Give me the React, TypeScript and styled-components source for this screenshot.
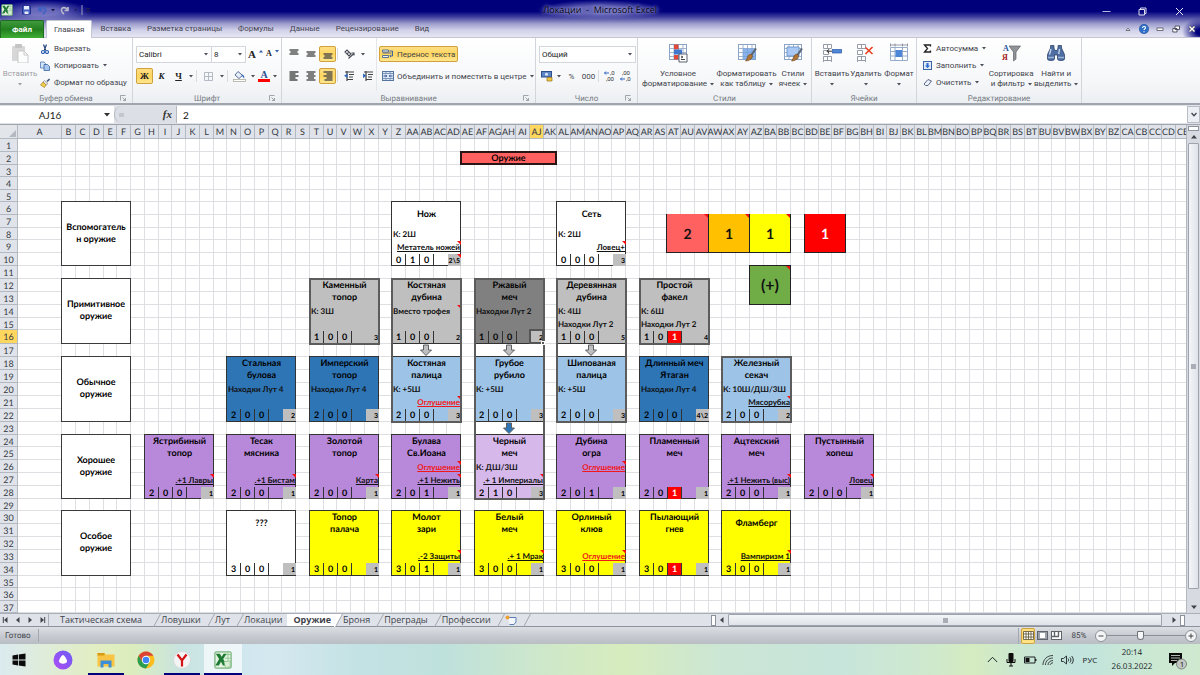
import React from 'react';
import styled, { createGlobalStyle, css } from 'styled-components';

const GlobalStyle = createGlobalStyle`
  *, *::before, *::after { box-sizing: border-box; }
  html, body { margin: 0; padding: 0; }
  body {
    font-family: Roboto, "Open Sans", sans-serif;
    font-size: 8px;
    color: #3f444c;
    text-rendering: geometricPrecision;
    overflow: hidden;
  }
  button, input, select { font: inherit; color: inherit; margin: 0; padding: 0; border: 0; background: none; border-radius: 0; }
  svg { display: block; flex: none; }
`;

/* ---------- data ---------- */

type Tone = 'white' | 'stone' | 'iron' | 'steel' | 'sky' | 'violet' | 'lilac' | 'gold';

const tones: Record<Tone, string> = {
  white: '#ffffff',
  stone: '#bfbfbf',
  iron: '#808080',
  steel: '#2e75b6',
  sky: '#9dc3e6',
  violet: '#b889db',
  lilac: '#d6b8eb',
  gold: '#ffff00',
};

interface Effect {
  text: string;
  right?: boolean;
  red?: boolean;
  note?: boolean;
}

interface Weapon {
  slot: number;
  row: number;
  name: string[];
  tone: Tone;
  first?: Effect;
  second?: Effect;
  stats: [number, number, number];
  fire?: boolean;
  level: string;
  levelNote?: boolean;
}

const left = (text: string, note = false): Effect => ({ text, note });
const right = (text: string, red = false): Effect => ({ text, right: true, red, note: true });

const weapons: Weapon[] = [
  { slot: 4, row: 6, name: ['Нож'], tone: 'white', first: left('К: 2Ш'), second: right('Метатель ножей'), stats: [0, 1, 0], level: '2\\5', levelNote: true },
  { slot: 6, row: 6, name: ['Сеть'], tone: 'white', first: left('К: 2Ш'), second: right('Ловец+'), stats: [0, 0, 0], level: '3' },

  { slot: 3, row: 12, name: ['Каменный', 'топор'], tone: 'stone', first: left('К: 3Ш'), stats: [1, 0, 0], level: '3' },
  { slot: 4, row: 12, name: ['Костяная', 'дубина'], tone: 'stone', first: left('Вместо трофея', true), stats: [1, 0, 0], level: '2' },
  { slot: 5, row: 12, name: ['Ржавый', 'меч'], tone: 'iron', first: left('Находки Лут 2'), stats: [1, 0, 0], level: '2' },
  { slot: 6, row: 12, name: ['Деревянная', 'дубина'], tone: 'stone', first: left('К: 4Ш'), second: left('Находки Лут 2'), stats: [1, 0, 0], level: '5' },
  { slot: 7, row: 12, name: ['Простой', 'факел'], tone: 'stone', first: left('К: 6Ш'), second: left('Находки Лут 2'), stats: [1, 0, 1], fire: true, level: '4' },

  { slot: 2, row: 18, name: ['Стальная', 'булова'], tone: 'steel', first: left('Находки Лут 4'), stats: [2, 0, 0], level: '2' },
  { slot: 3, row: 18, name: ['Имперский', 'топор'], tone: 'steel', first: left('Находки Лут 4'), stats: [2, 0, 0], level: '3' },
  { slot: 4, row: 18, name: ['Костяная', 'палица'], tone: 'sky', first: left('К: +5Ш'), second: right('Оглушение', true), stats: [2, 0, 0], level: '3' },
  { slot: 5, row: 18, name: ['Грубое', 'рубило'], tone: 'sky', first: left('К: +5Ш'), stats: [2, 0, 0], level: '3' },
  { slot: 6, row: 18, name: ['Шипованая', 'палица'], tone: 'sky', first: left('К: +5Ш'), stats: [2, 0, 0], level: '3' },
  { slot: 7, row: 18, name: ['Длинный меч', 'Ятаган'], tone: 'steel', first: left('Находки Лут 4'), stats: [2, 0, 0], level: '4\\2' },
  { slot: 8, row: 18, name: ['Железный', 'секач'], tone: 'sky', first: left('К: 10Ш/ДШ/3Ш'), second: right('Мясорубка'), stats: [2, 0, 0], level: '2' },

  { slot: 1, row: 24, name: ['Ястрибиный', 'топор'], tone: 'violet', second: right('.+1 Лавры'), stats: [2, 0, 0], level: '1' },
  { slot: 2, row: 24, name: ['Тесак', 'мясника'], tone: 'violet', second: right('.+1 Бистам'), stats: [2, 0, 0], level: '1' },
  { slot: 3, row: 24, name: ['Золотой', 'топор'], tone: 'violet', second: right('Карта'), stats: [2, 0, 0], level: '1' },
  { slot: 4, row: 24, name: ['Булава', 'Св.Иоана'], tone: 'violet', first: right('Оглушение', true), second: right('.+1 Нежить'), stats: [2, 0, 1], level: '1' },
  { slot: 5, row: 24, name: ['Черный', 'меч'], tone: 'lilac', first: left('К: ДШ/3Ш'), second: right('.+ 1 Империалы'), stats: [2, 1, 0], level: '3' },
  { slot: 6, row: 24, name: ['Дубина', 'огра'], tone: 'violet', first: right('Оглушение', true), stats: [2, 0, 1], level: '1' },
  { slot: 7, row: 24, name: ['Пламенный', 'меч'], tone: 'violet', stats: [2, 0, 1], fire: true, level: '1' },
  { slot: 8, row: 24, name: ['Ацтекский', 'меч'], tone: 'violet', second: right('.+1 Нежить (выс)'), stats: [2, 0, 0], level: '1' },
  { slot: 9, row: 24, name: ['Пустынный', 'хопеш'], tone: 'violet', second: right('Ловец'), stats: [2, 0, 0], level: '1' },

  { slot: 2, row: 30, name: ['???'], tone: 'white', stats: [3, 0, 0], level: '1' },
  { slot: 3, row: 30, name: ['Топор', 'палача'], tone: 'gold', stats: [3, 0, 0], level: '1' },
  { slot: 4, row: 30, name: ['Молот', 'зари'], tone: 'gold', second: right('.-2 Защиты'), stats: [3, 0, 1], level: '1' },
  { slot: 5, row: 30, name: ['Белый', 'меч'], tone: 'gold', second: right('.+ 1 Мрак'), stats: [3, 0, 0], level: '1' },
  { slot: 6, row: 30, name: ['Орлиный', 'клюв'], tone: 'gold', second: right('Оглушение', true), stats: [3, 0, 0], level: '1' },
  { slot: 7, row: 30, name: ['Пылающий', 'гнев'], tone: 'gold', stats: [3, 0, 1], fire: true, level: '1' },
  { slot: 8, row: 30, name: ['Фламберг'], tone: 'gold', second: right('Вампиризм 1'), stats: [3, 0, 0], level: '1' },
];

const categories = [
  { row: 6, lines: ['Вспомогатель', 'н оружие'] },
  { row: 12, lines: ['Примитивное', 'оружие'] },
  { row: 18, lines: ['Обычное', 'оружие'] },
  { row: 24, lines: ['Хорошее', 'оружие'] },
  { row: 30, lines: ['Особое', 'оружие'] },
];

const counters = [
  { col: 44, text: '2', bg: '#ff6161', note: true },
  { col: 47, text: '1', bg: '#ffc000', note: true },
  { col: 50, text: '1', bg: '#ffff00', note: true },
  { col: 54, text: '1', bg: '#ff0000', light: true },
];

const frames = [
  { slot: 3, from: 12, to: 17 },
  { slot: 4, from: 12, to: 23 },
  { slot: 5, from: 12, to: 29 },
  { slot: 6, from: 12, to: 23 },
  { slot: 7, from: 12, to: 17 },
  { slot: 8, from: 18, to: 23 },
];

const arrows = [
  { slot: 4, row: 17, fill: '#bfbfbf' },
  { slot: 5, row: 17, fill: '#bfbfbf' },
  { slot: 6, row: 17, fill: '#bfbfbf' },
  { slot: 5, row: 23, fill: '#2e75b6' },
];

const rowHeights = [
  13, 13, 12, 13, 12, 13, 13, 12, 13, 13, 13, 13, 13, 13, 12, 14, 13, 13, 13, 13,
  13, 13, 13, 12, 13, 13, 13, 13, 12, 13, 13, 13, 13, 13, 12, 13, 12,
];

const columnCount = 83;

const columnName = (index: number): string =>
  index < 26
    ? String.fromCharCode(65 + index)
    : String.fromCharCode(64 + Math.floor(index / 26)) + String.fromCharCode(65 + (index % 26));

/* ---------- window frame ---------- */

const Window = styled.div`
  display: flex;
  flex-direction: column;
  min-height: 100vh;
  overflow: hidden;
  background: #dfe3e8;
`;

const Chrome = styled.header`
  background:
    radial-gradient(ellipse 18px 14px at 100% 84%, #00007b 20%, rgba(0, 0, 123, 0) 100%),
    linear-gradient(#00007b 0%, #00007b 30%, #3c3c9c 44%, #9c9ccc 62%, #d2d2ea 80%, #e9e9f6 100%);
`;

const TitleBar = styled.div`
  display: grid;
  grid-template-columns: 1fr auto 1fr;
  align-items: center;
  height: 20px;
`;

const QuickAccess = styled.div`
  display: flex;
  align-items: center;
  gap: 6px;
  width: 92px;
  height: 20px;
  padding-left: 1px;
  background: radial-gradient(ellipse 50px 12px at 46% 60%, rgba(150, 150, 215, 0.7) 30%, rgba(150, 150, 215, 0) 100%);
`;

const Title = styled.h1`
  margin: 0;
  padding: 0 6px;
  background: radial-gradient(closest-side, rgba(130, 130, 200, 0.75) 40%, rgba(130, 130, 200, 0) 100%);
  font-family: "Open Sans", sans-serif;
  font-size: 9px;
  line-height: 20px;
  font-weight: 400;
  color: #05050f;
  white-space: pre;
  text-shadow: 0 0 3px #a5a5dc, 0 0 5px #9a9ad6;
`;

const WindowButtons = styled.div`
  display: flex;
  justify-content: flex-end;
  padding: 3px 2px 0 0;
`;

const FrameButton = styled.button<{ $w: number }>`
  display: flex;
  align-items: center;
  justify-content: center;
  width: ${(p) => p.$w}px;
  height: 16px;
`;

const TabRow = styled.nav`
  display: flex;
  align-items: flex-end;
  height: 18px;
  border-bottom: 1px solid #c3c7d4;
`;

const FileTab = styled.button`
  width: 44px;
  height: 18px;
  && {
    margin: 0 2px -1px 0;
    border: 1px solid #1f6b22;
    border-bottom: 0;
    border-radius: 2px 2px 0 0;
    background: linear-gradient(#3f9a3c, #23801f 50%, #3fae35);
    color: #fff;
    font-weight: 700;
  }
`;

const RibbonTab = styled.button<{ $active?: boolean }>`
  height: 18px;
  && {
    padding: 0 8px;
    color: #43434f;
    ${(p) =>
      p.$active &&
      css`
        padding: 0 7px;
        margin-bottom: -1px;
        background: #fff;
        border: 1px solid #c3c7d4;
        border-bottom: 0;
        border-radius: 2px 2px 0 0;
      `}
  }
`;

const TabTools = styled.div`
  display: flex;
  align-items: center;
  margin-left: auto;
`;

/* ---------- ribbon ---------- */

const Ribbon = styled.div`
  display: flex;
  height: 67px;
  background: linear-gradient(#ffffff, #f7f8fa 60%, #eceff2);
  border-bottom: 2px solid #a0a5ad;
`;

const Group = styled.section<{ $w: number }>`
  display: flex;
  flex-direction: column;
  flex: none;
  width: ${(p) => p.$w}px;
  border-right: 1px solid #d2d5da;
`;

const GroupBody = styled.div<{ $pad?: number }>`
  display: flex;
  flex: 1;
  padding-left: ${(p) => p.$pad ?? 4}px;
`;

const GroupLabel = styled.div`
  display: grid;
  grid-template-columns: 12px 1fr 12px;
  align-items: center;
  height: 12px;
  padding-top: 2px;
  text-align: center;
  color: #777c85;
`;

const Stack = styled.div<{ $divided?: boolean }>`
  display: flex;
  flex-direction: column;
  gap: 6px;
  padding-top: 8px;
  ${(p) =>
    p.$divided &&
    css`
      padding-left: 2px;
      border-left: 1px solid #e4e6ea;
    `}
`;

const ToolRow = styled.div`
  display: flex;
  align-items: center;
  height: 16px;
`;

const hot = css`
  background: linear-gradient(#ffe08a, #ffd65e 50%, #ffe896);
  outline: 1px solid #cfa23f;
  outline-offset: -1px;
  border-radius: 2px;
`;

const ToolButton = styled.button<{ $w?: number; $hot?: boolean }>`
  display: flex;
  align-items: center;
  justify-content: center;
  flex: none;
  gap: 3px;
  width: ${(p) => (p.$w ? `${p.$w}px` : 'auto')};
  height: 16px;
  white-space: nowrap;
  && {
    padding: 0 ${(p) => (p.$w ? 0 : 3)}px;
    ${(p) => p.$hot && hot}
  }
`;

const Letter = styled.span<{ $italic?: boolean; $under?: boolean; $size?: number }>`
  font-family: "Liberation Serif", serif;
  font-weight: 700;
  font-size: ${(p) => p.$size ?? 9}px;
  line-height: 10px;
  color: #222;
  font-style: ${(p) => (p.$italic ? 'italic' : 'normal')};
  text-decoration: ${(p) => (p.$under ? 'underline' : 'none')};
`;

const Divider = styled.span`
  flex: none;
  width: 1px;
  height: 12px;
  margin: 0 1px;
  background: #d9dce0;
`;

const PickerBox = styled.label<{ $w: number }>`
  position: relative;
  display: flex;
  align-items: center;
  width: ${(p) => p.$w}px;
  height: 17px;
  border: 1px solid #d3d6da;
  background: #fff;
  & + & { margin-left: -1px; }
  select {
    appearance: none;
    width: 100%;
    height: 15px;
    padding-left: 2px;
    color: #222;
    outline: 0;
  }
  svg { position: absolute; right: 3px; pointer-events: none; }
`;

const CommandList = styled.div`
  display: flex;
  flex-direction: column;
  padding-top: 2px;
`;

const Command = styled.button`
  display: flex;
  align-items: center;
  gap: 4px;
  height: 17px;
  white-space: nowrap;
  && { padding: 0 2px; }
`;

const BigButton = styled.button<{ $w: number; $faded?: boolean }>`
  display: flex;
  flex-direction: column;
  align-items: center;
  flex: none;
  width: ${(p) => p.$w}px;
  line-height: 10px;
  white-space: nowrap;
  opacity: ${(p) => (p.$faded ? 0.5 : 1)};
  && { padding-top: 5px; }
  > svg { margin-bottom: 6px; }
`;

const BigLine = styled.span`
  display: flex;
  align-items: center;
  gap: 3px;
  height: 10px;
`;

/* ---------- formula bar ---------- */

const FormulaBar = styled.div`
  display: flex;
  height: 20px;
  padding: 1px 0;
  background: #dfe3e8;
  border-bottom: 1px solid #a0a5ad;
  font-family: Lato, "Open Sans", sans-serif;
`;

const NameBox = styled.label`
  display: flex;
  align-items: center;
  width: 114px;
  padding-right: 4px;
  background: #fff;
  input {
    flex: 1;
    width: 0;
    padding-right: 4px;
    text-align: center;
    font-size: 10px;
    color: #222;
  }
`;

const FxButtons = styled.div`
  display: flex;
  align-items: center;
  justify-content: space-between;
  width: 63px;
  padding: 0 4px;
  border: 1px solid #b4b9c0;
  border-width: 0 1px 0 1px;
  border-radius: 8px 0 0 8px;
  background: #dce0e6;
`;

const Fx = styled.span`
  font-family: "Liberation Serif", serif;
  font-style: italic;
  font-weight: 700;
  font-size: 11px;
  line-height: 14px;
  color: #333;
`;

const FormulaInput = styled.input`
  flex: 1;
  min-width: 0;
  && { padding-left: 6px; background: #fff; font-size: 10px; color: #111; }
`;

const ExpandButton = styled.button`
  display: flex;
  align-items: center;
  justify-content: center;
  width: 13px;
  && { border: 1px solid #b9bec6; background: #eceff3; }
`;

/* ---------- sheet ---------- */

const SheetArea = styled.main`
  display: flex;
  flex: 1 0 auto;
`;

const Viewport = styled.div`
  flex: 1;
  min-width: 0;
  overflow: hidden;
  background: #fff;
`;

const Sheet = styled.table`
  display: grid;
  grid-template-columns: 18px 44px repeat(20, 14px 14px 14px 13px) 14px 14px;
  grid-template-rows: 14px ${rowHeights.map((h) => `${h}px`).join(' ')};
  width: max-content;
  font-family: Lato, "Open Sans", sans-serif;
  colgroup, thead, tbody, tr { display: contents; }
  td, th { padding: 0; }
`;

const ColumnLine = styled.col<{ $at: number }>`
  display: block;
  grid-row: 2 / -1;
  grid-column: ${(p) => p.$at};
  border-right: 1px solid #dddfe2;
`;

const headerFace = css<{ $on?: boolean }>`
  font-weight: 400;
  font-size: 9px;
  line-height: 13px;
  color: #33373e;
  text-align: center;
  white-space: nowrap;
  background: ${(p) => (p.$on ? '#ffd75f' : '#e0e4ea')};
  border-right: 1px solid #b3b9c1;
  border-bottom: 1px solid #b3b9c1;
`;

const Corner = styled.td`
  display: flex;
  align-items: flex-end;
  justify-content: flex-end;
  grid-area: 1 / 1;
  background: #e2e6eb;
  border-right: 1px solid #b3b9c1;
  border-bottom: 1px solid #b3b9c1;
`;

const ColumnHeader = styled.th<{ $at: number; $on?: boolean }>`
  ${headerFace}
  grid-row: 1;
  grid-column: ${(p) => p.$at};
  display: flex;
  justify-content: center;
`;

const RowHeader = styled.th<{ $at: number; $on?: boolean }>`
  ${headerFace}
  grid-row: ${(p) => p.$at};
  grid-column: 1;
`;

const RowLine = styled.td<{ $at: number }>`
  grid-row: ${(p) => p.$at};
  grid-column: 2 / -1;
  border-bottom: 1px solid #dddfe2;
`;

/* Merged range: k counts columns from B, rows are sheet rows. */
const range = css<{ $k: number; $row: number; $cols: number; $rows: number }>`
  position: relative;
  z-index: 1;
  grid-column: ${(p) => p.$k + 3} / span ${(p) => p.$cols};
  grid-row: ${(p) => p.$row + 1} / span ${(p) => p.$rows};
  margin: -1px 0 0 -1px;
`;

const Category = styled.td`
  ${range}
  display: flex;
  flex-direction: column;
  justify-content: center;
  border: 1px solid #3a3a3a;
  background: #fff;
  color: #000;
  font-size: 9px;
  font-weight: 700;
  line-height: 12px;
  text-align: center;
  && { padding-bottom: 2px; }
`;

const Heading = styled.td`
  ${range}
  border: 2px solid #2a1414;
  background: #ff6161;
  color: #000;
  font-size: 9px;
  font-weight: 700;
  line-height: 10px;
  text-align: center;
`;

const Counter = styled.td<{ $bg: string; $light?: boolean; $boxed?: boolean }>`
  ${range}
  display: flex;
  align-items: center;
  justify-content: center;
  background: ${(p) => p.$bg};
  border: 1px solid #222;
  border-width: ${(p) => (p.$boxed ? '1px' : '0 1px 1px')};
  color: ${(p) => (p.$light ? '#fff' : '#111')};
  font-size: ${(p) => (p.$boxed ? 16 : 14)}px;
  font-weight: 700;
`;

const CardCell = styled.td<{ $tone: Tone }>`
  ${range}
  display: grid;
  grid-template-columns: repeat(4, 14px) 1fr;
  grid-template-rows: 26px 13px 13px 1fr;
  border: 1px solid #333;
  background: ${(p) => tones[p.$tone]};
  color: #000;
  font-weight: 700;
`;

const CardName = styled.div`
  grid-column: 1 / -1;
  display: flex;
  flex-direction: column;
  justify-content: center;
  padding-bottom: 2px;
  font-size: 9px;
  line-height: 12px;
  text-align: center;
  white-space: nowrap;
`;

const CardEffect = styled.div<{ $right?: boolean; $red?: boolean }>`
  position: relative;
  grid-column: 1 / -1;
  padding: 0 1px;
  line-height: 12px;
  white-space: nowrap;
  text-align: ${(p) => (p.$right ? 'right' : 'left')};
  text-decoration: ${(p) => (p.$right ? 'underline' : 'none')};
  color: ${(p) => (p.$red ? '#f01818' : '#111')};
`;

const Stat = styled.div<{ $fire?: boolean }>`
  border-right: 1px solid #333;
  font-size: 9px;
  line-height: 12px;
  text-align: center;
  background: ${(p) => (p.$fire ? '#ff0000' : 'transparent')};
  color: ${(p) => (p.$fire ? '#fff' : '#000')};
`;

const Level = styled.div`
  position: relative;
  grid-column: 5;
  justify-self: end;
  width: 13px;
  padding: 3px 1px 0 0;
  background: #bfbfbf;
  font-size: 7px;
  line-height: 9px;
  text-align: right;
`;

const NoteMark = styled.i`
  position: absolute;
  top: 0;
  right: 0;
  border-top: 4px solid #f01010;
  border-left: 4px solid transparent;
`;

const Outline = styled.td`
  ${range}
  z-index: 2;
  margin: -1px -1px -1px -1px;
  border: 2px solid #5c5c5c;
  pointer-events: none;
`;

const ArrowCell = styled.td`
  ${range}
  display: flex;
  justify-content: center;
  margin: 0 1px 1px 0;
  background: #fff;
`;

const Selection = styled.td`
  ${range}
  z-index: 3;
  border: 2px solid #555;
  &::after {
    content: "";
    position: absolute;
    right: -3px;
    bottom: -3px;
    width: 4px;
    height: 4px;
    border: 1px solid #fff;
    background: #555;
  }
`;

/* ---------- scroll bars, sheet tabs, status ---------- */

const VerticalScroll = styled.div`
  display: flex;
  flex-direction: column;
  align-items: center;
  width: 14px;
  padding: 1px 1px 0;
  background: #d7dbe1;
  border-left: 1px solid #b3b9c1;
`;

const ScrollButton = styled.button`
  display: flex;
  flex: none;
  align-items: center;
  justify-content: center;
  width: 12px;
  height: 12px;
`;

const SplitHandle = styled.span<{ $tall?: boolean }>`
  flex: none;
  width: ${(p) => (p.$tall ? 5 : 11)}px;
  height: ${(p) => (p.$tall ? 11 : 5)}px;
  border: 1px solid #8d939c;
  background: #fff;
`;

const Thumb = styled.div<{ $vertical?: boolean }>`
  display: flex;
  flex: 1;
  align-items: center;
  justify-content: center;
  align-self: stretch;
  margin: ${(p) => (p.$vertical ? '0 0 12px' : '0 6px 0 0')};
  border: 1px solid #9ea4ad;
  border-radius: 1px;
  background: linear-gradient(${(p) => (p.$vertical ? '90deg' : '180deg')}, #f3f5f8, #dfe3e9);
  &::after {
    content: "";
    width: 5px;
    height: 5px;
    background: #a9aeb6;
  }
`;

const SheetBar = styled.div`
  display: flex;
  height: 14px;
  background: #dfe3e9;
  border-top: 1px solid #a9afb8;
  border-bottom: 1px solid #8c929b;
`;

const SheetTabs = styled.div`
  display: flex;
  align-items: stretch;
  flex: 0 0 711px;
  font-family: "Open Sans", sans-serif;
`;

const NavButtons = styled.div`
  display: flex;
  width: 49px;
  border-right: 1px solid #a9afb8;
`;

const SheetTab = styled.button<{ $active?: boolean; $first?: boolean }>`
  && {
    padding-left: ${(p) => (p.$first ? 11 : p.$active ? 6 : 0)}px;
    padding-right: ${(p) => (p.$first ? 10 : p.$active ? 3 : 5)}px;
    font-size: 9px;
    line-height: 12px;
    font-weight: ${(p) => (p.$active ? 700 : 400)};
    background: ${(p) => (p.$active ? '#fff' : 'transparent')};
  }
`;

const HorizontalScroll = styled.div`
  display: flex;
  align-items: center;
  flex: 1;
  padding-right: 15px;
`;

const StatusBar = styled.footer`
  display: flex;
  align-items: center;
  height: 17px;
  padding: 0 3px 0 5px;
  background: linear-gradient(#dcdfe3, #c6c9cf 55%, #b9bdc4);
`;

const StatusText = styled.span`
  padding-right: 7px;
  border-right: 1px solid #a4a9b1;
  line-height: 13px;
`;

const ViewButtons = styled.div`
  display: flex;
  align-items: center;
  margin-left: auto;
  padding-left: 2px;
  border-left: 1px solid #a4a9b1;
`;

const ZoomValue = styled.span`
  width: 32px;
  text-align: center;
`;

const ZoomSlider = styled.input`
  appearance: none;
  width: 78px;
  height: 12px;
  && { background: linear-gradient(#8b9098, #8b9098) center / 100% 1px no-repeat; }
  &::-webkit-slider-thumb {
    appearance: none;
    width: 7px;
    height: 9px;
    border: 1px solid #6f747c;
    border-radius: 1px 1px 4px 4px;
    background: #f6f7f9;
  }
`;

/* ---------- taskbar ---------- */

const Taskbar = styled.footer`
  display: flex;
  align-items: stretch;
  height: 31px;
  font-family: "Open Sans", sans-serif;
  background:
    linear-gradient(90deg, #dbebef 0%, #dfecd8 4%, #e2eec2 8%, #dcedbd 11%, #c9e4e0 15%, #cfe6ee 19%, #d4e8ef 23%,
      #c3e2e4 30%, #bfe1dc 37%, #cfe8c8 46%, #d7ecbe 52%, #cbe6d4 60%, #c8e5dc 70%, #cfe9cc 78%, #d5ebc0 81%,
      #c9e6d6 86%, #c2e4de 90%, #cbe8d2 96%, #cfe9cf 100%);
`;

const TaskButton = styled.button<{ $w: number; $open?: boolean; $active?: boolean }>`
  display: flex;
  align-items: center;
  justify-content: center;
  width: ${(p) => p.$w}px;
  && {
    margin-right: ${(p) => (p.$open ? 4 : 0)}px;
    border-top: 2px solid transparent;
    border-bottom: 2px solid ${(p) => (p.$open || p.$active ? '#00007b' : 'transparent')};
    background: ${(p) => (p.$active ? 'rgba(255, 255, 255, 0.65)' : 'transparent')};
  }
`;

const Tray = styled.div`
  display: flex;
  align-items: center;
  margin-left: auto;
  padding-right: 8px;
  color: #14181c;
`;

const TrayButton = styled.button<{ $w: number }>`
  display: flex;
  align-items: center;
  justify-content: center;
  width: ${(p) => p.$w}px;
  height: 31px;
`;

const Clock = styled.time`
  width: 60px;
  line-height: 14px;
  text-align: center;
`;

/* ---------- icons ---------- */

const Caret = ({ color = '#4a4f57' }: { color?: string }) => (
  <svg width="4" height="3" viewBox="0 0 4 3" aria-hidden="true"><path d="M0 0h4L2 2.500z" fill={color} /></svg>
);

const CaretButton = () => <ToolButton $w={8} aria-label="Ещё"><Caret /></ToolButton>;

const Triangle = ({ dir, bar }: { dir: 'left' | 'right' | 'up' | 'down'; bar?: boolean }) => {
  const turn = { right: 0, down: 90, left: 180, up: 270 }[dir];
  return (
    <svg width="8" height="8" viewBox="0 0 8 8" aria-hidden="true">
      <g transform={`rotate(${turn} 4 4)`} fill="#3e434b">
        <path d="M2.500 1l3.500 3-3.500 3z" />
        {bar && <path d="M6.200 1h1v6h-1z" />}
      </g>
    </svg>
  );
};

const ExcelIcon = ({ size }: { size: number }) => (
  <svg width={size} height={size} viewBox="0 0 20 20" aria-hidden="true">
    <rect x="1" y="1" width="18" height="18" rx="1" fill="#e4f3e2" stroke="#4e9b53" />
    <path d="M12 4h7M12 8h7M12 12h7M15.500 1v12" stroke="#8cc68b" strokeWidth="1" />
    <path d="M2 3h4.500l2 3.500L10.700 3H14l-3.800 6L14.500 16H10l-2.200-4L5.400 16H1.500l4.200-7z" fill="#1f7a33" />
    <path d="M11 12l7-1v6l-5 2z" fill="#d8efd6" stroke="#6eb36f" strokeWidth=".6" />
  </svg>
);

const LinesIcon = ({ rows }: { rows: [number, number][] }) => (
  <svg width="12" height="12" viewBox="0 0 12 12" aria-hidden="true">
    {rows.map(([y, w], i) => (
      <path key={i} d={`M${w < 0 ? 10.5 + w : (12 - w) / 2} ${y}h${Math.abs(w)}`} stroke="#4b4b4b" strokeWidth="1.400" />
    ))}
  </svg>
);

const LeftLines = () => (
  <svg width="12" height="12" viewBox="0 0 12 12" aria-hidden="true">
    <path d="M1.500 2h9M1.500 4h6M1.500 6h9M1.500 8h6M1.500 10h8" stroke="#4b4b4b" strokeWidth="1.400" />
  </svg>
);

const IndentIcon = ({ flip }: { flip?: boolean }) => (
  <svg width="12" height="12" viewBox="0 0 12 12" aria-hidden="true">
    <path d="M2 2h9M6 4.500h5M6 7h4M4 9.500h6M4 1v10" stroke="#444" strokeWidth="1.200" />
    <path d={flip ? 'M1 3.500l3.500 2.300L1 8z' : 'M4.500 3.500L1 5.800 4.500 8z'} fill="#2f66b8" />
  </svg>
);

const Grid = ({ children }: { children?: React.ReactNode }) => (
  <svg width="20" height="20" viewBox="0 0 20 20" aria-hidden="true">
    <rect x="1.500" y="1.500" width="17" height="15" fill="#fff" stroke="#8ba3c4" />
    <path d="M1.500 5.500h17M1.500 9.500h17M1.500 13.500h17M6 1.500v15M10.500 1.500v15M15 1.500v15" stroke="#8ba3c4" strokeWidth=".8" />
    {children}
  </svg>
);

const Brush = () => (
  <g>
    <path d="M19 5.500l-5 7" stroke="#5c6470" strokeWidth="2" />
    <path d="M14.500 11.500c1.500 1 1.200 3-.5 4.500-1.500 1.300-3.500 2-5.500 2 1.500-1.500 1.500-3 2.500-5 .8-1.500 2.300-2 3.500-1.500z" fill="#b07434" stroke="#6d4417" strokeWidth=".6" />
  </g>
);

const PasteIcon = () => (
  <svg width="20" height="20" viewBox="0 0 20 20" aria-hidden="true">
    <rect x="2" y="3" width="13" height="15" rx="1" fill="#b4b4b4" />
    <rect x="5" y="1" width="7" height="4" rx="1" fill="#8c8c8c" />
    <path d="M8 8h6l4 4v8H8z" fill="#fff" stroke="#999" />
    <path d="M14 8v4h4" fill="none" stroke="#999" />
  </svg>
);

const CutIcon = () => (
  <svg width="10" height="10" viewBox="0 0 10 10" aria-hidden="true">
    <path d="M3.500.500l2.300 6M6.500.500l-2.300 6" stroke="#27467e" strokeWidth="1.200" />
    <circle cx="3" cy="8" r="1.500" fill="none" stroke="#2d62b0" strokeWidth="1.200" />
    <circle cx="7" cy="8" r="1.500" fill="none" stroke="#2d62b0" strokeWidth="1.200" />
  </svg>
);

const CopyIcon = () => (
  <svg width="10" height="10" viewBox="0 0 10 10" aria-hidden="true">
    <path d="M.500 1h3.500l1.500 1.500v4.500h-5z" fill="#d6e4f7" stroke="#4a78b8" strokeWidth=".8" />
    <path d="M4 3.500h3.500L9.500 5.500v4H4z" fill="#a9c7ee" stroke="#33639f" strokeWidth=".8" />
  </svg>
);

const PainterIcon = () => (
  <svg width="10" height="10" viewBox="0 0 10 10" aria-hidden="true">
    <path d="M9.500 1L7 3.500" stroke="#43587a" strokeWidth="1.600" />
    <path d="M4.500 2.500l3.500 3L6 7 3 4z" fill="#e6e6ec" stroke="#666" strokeWidth=".5" />
    <path d="M3 4l3.200 3L4.500 9.500.500 7z" fill="#f2cf4c" stroke="#94701a" strokeWidth=".6" />
  </svg>
);

const LauncherIcon = () => (
  <svg width="6" height="6" viewBox="0 0 6 6" aria-hidden="true">
    <path d="M.500 5.500v-5h5M2.500 2.500l3 3M5.500 3v2.500H3" fill="none" stroke="#8b9098" strokeWidth=".8" />
  </svg>
);

const HeadTail = ({ red }: { red?: boolean }) => (
  <svg width="20" height="20" viewBox="0 0 20 20" aria-hidden="true">
    <path d="M1.500 1.500h8v4h-8zM1.500 13.500h8v4h-8zM5.500 1.500v4M5.500 13.500v4M1.500 7.500h5v4h-5zM1.500 17.500v1.500M9.500 17.500v1.500" fill="#fff" stroke="#8a929e" strokeWidth=".9" />
    {red ? (
      <path d="M9.500 4.500l7 6.500M16.500 4l-7 7" stroke="#e8401c" strokeWidth="1.600" />
    ) : (
      <>
        <rect x="10.500" y="6.500" width="9" height="3.500" fill="#4f87d8" stroke="#2c5ba5" strokeWidth=".7" />
        <path d="M10 8.200H5M7 6.200l-2 2 2 2" fill="none" stroke="#333" />
      </>
    )}
  </svg>
);

const FormatIcon = () => (
  <svg width="20" height="20" viewBox="0 0 20 20" aria-hidden="true">
    <path d="M1.500 4.500h17v13h-17zM1.500 8.500h17M1.500 13h17M6 4.500v13M13.500 4.500v13" fill="#fff" stroke="#8ba3c4" strokeWidth=".9" />
    <rect x="6.500" y="7" width="6.500" height="7" fill="#4f87d8" />
    <path d="M1.500 2h17M1.500.500v3M6 .500v3M13.500.500v3M18.500.500v3" stroke="#7a8290" strokeWidth=".8" />
  </svg>
);

const SortIcon = () => (
  <svg width="20" height="20" viewBox="0 0 20 20" aria-hidden="true">
    <path d="M8 3h11.500l-4.500 6v7l-2.500 2V9z" fill="#909499" stroke="#5e6268" strokeWidth=".7" />
    <text x="2" y="8" fontFamily="Liberation Serif, serif" fontWeight="700" fontSize="8" fill="#24509c">А</text>
    <text x="1" y="17" fontFamily="Liberation Serif, serif" fontWeight="700" fontSize="8" fill="#a01818">Я</text>
  </svg>
);

const BinocularsIcon = () => (
  <svg width="20" height="20" viewBox="0 0 20 20" aria-hidden="true">
    <path d="M4.500 5V2.500H8V5l1 2.500h2L12 5V2.500h3.500V5l3 6.500V16c0 2-7 2-7 0v-4h-3v4c0 2-7 2-7 0v-4.500z" fill="#4f6fa3" stroke="#22395f" strokeWidth=".7" />
    <path d="M5 6l-1.500 5.500M13.500 6l-.8 5" stroke="#c3d5ee" strokeWidth="1.400" />
    <path d="M2 14.500h6M12 14.500h6" stroke="#9db4d8" strokeWidth="1.400" />
  </svg>
);

const MergeIcon = () => (
  <svg width="12" height="10" viewBox="0 0 12 10" aria-hidden="true">
    <rect x=".500" y=".500" width="11" height="9" fill="#dbe8f8" stroke="#56769f" />
    <path d="M1 2.500h10M1 7.500h10M4 .500v2M8 .500v2M4 7.500v2M8 7.500v2" stroke="#56769f" strokeWidth=".7" />
    <path d="M1.500 5h3M10.500 5h-3M3.500 3.800L4.700 5 3.500 6.200M8.500 3.800L7.300 5l1.200 1.200" fill="none" stroke="#1d3f7a" strokeWidth=".9" />
  </svg>
);

const WrapIcon = () => (
  <svg width="12" height="10" viewBox="0 0 12 10" aria-hidden="true">
    <path d="M.500 1h6v2h-6zM.500 4h9M.500 6.500h6v2h-6z" fill="#eef3fa" stroke="#4d6488" strokeWidth=".9" />
    <path d="M7.500 2h3v5H8M9 5.800L7.800 7 9 8.200" fill="none" stroke="#2c5ba5" strokeWidth=".9" />
  </svg>
);

const DownArrow = ({ fill }: { fill: string }) => (
  <svg width="12" height="12" viewBox="0 0 12 12" aria-hidden="true">
    <path d="M3.500 1h5v5h3L6 11.500.500 6h3z" fill={fill} stroke="#5c6064" strokeWidth="1" />
  </svg>
);

const Slash = ({ open }: { open?: boolean }) => (
  <svg width="9" height="13" viewBox="0 0 9 13" aria-hidden="true">
    {open && <path d="M0 0h8.500L1.500 13H0z" fill="#fff" />}
    <path d="M8.500 0L1.500 13" stroke="#9aa0a9" strokeWidth=".9" />
  </svg>
);

/* ---------- pieces ---------- */

const Big = ({ w, icon, lines, below, faded }: { w: number; icon: React.ReactNode; lines: string[]; below?: boolean; faded?: boolean }) => (
  <BigButton $w={w} $faded={faded}>
    {icon}
    {lines.map((line, i) => (
      <BigLine key={line}>
        {line}
        {!below && i === lines.length - 1 && <Caret />}
      </BigLine>
    ))}
    {below && <BigLine><Caret /></BigLine>}
  </BigButton>
);

const Picker = ({ w, label, value }: { w: number; label: string; value: string }) => (
  <PickerBox $w={w}>
    <select aria-label={label} defaultValue={value}><option>{value}</option></select>
    <Caret />
  </PickerBox>
);

const RibbonGroup = ({ w, label, pad, launcher, children }: { w: number; label: string; pad?: number; launcher?: boolean; children: React.ReactNode }) => (
  <Group $w={w} aria-label={label}>
    <GroupBody $pad={pad}>{children}</GroupBody>
    <GroupLabel><span /><span>{label}</span>{launcher && <LauncherIcon />}</GroupLabel>
  </Group>
);

const EffectLine = ({ effect }: { effect?: Effect }) => (
  <CardEffect $right={effect?.right} $red={effect?.red}>
    {effect?.text}
    {effect?.note && <NoteMark />}
  </CardEffect>
);

const Card = ({ weapon }: { weapon: Weapon }) => (
  <CardCell $k={weapon.slot * 6} $row={weapon.row} $cols={5} $rows={5} $tone={weapon.tone}>
    <CardName>{weapon.name.map((line) => <span key={line}>{line}</span>)}</CardName>
    <EffectLine effect={weapon.first} />
    <EffectLine effect={weapon.second} />
    {weapon.stats.map((value, i) => <Stat key={i} $fire={weapon.fire && i === 2}>{value}</Stat>)}
    <Level>{weapon.level}{weapon.levelNote && <NoteMark />}</Level>
  </CardCell>
);

const SheetRow = ({ row }: { row: number }) => (
  <tr>
    <RowHeader scope="row" $at={row + 1} $on={row === 16}>{row}</RowHeader>
    <RowLine $at={row + 1} />
    {row === 2 && <Heading $k={29} $row={2} $cols={7} $rows={1}>Оружие</Heading>}
    {categories.filter((c) => c.row === row).map((c) => (
      <Category key={c.row} $k={0} $row={row} $cols={5} $rows={5}>
        {c.lines.map((line) => <span key={line}>{line}</span>)}
      </Category>
    ))}
    {weapons.filter((w) => w.row === row).map((w) => <Card key={w.slot} weapon={w} />)}
    {row === 7 && counters.map((c) => (
      <Counter key={c.col} $k={c.col} $row={7} $cols={3} $rows={3} $bg={c.bg} $light={c.light}>
        {c.text}
        {c.note && <NoteMark />}
      </Counter>
    ))}
    {row === 11 && (
      <Counter $k={50} $row={11} $cols={3} $rows={3} $bg="#70ad47" $boxed>(+)<NoteMark /></Counter>
    )}
    {arrows.filter((a) => a.row === row).map((a) => (
      <ArrowCell key={a.slot} $k={a.slot * 6} $row={row} $cols={5} $rows={1}><DownArrow fill={a.fill} /></ArrowCell>
    ))}
    {frames.filter((f) => f.from === row).map((f) => (
      <Outline key={f.slot} $k={f.slot * 6} $row={row} $cols={5} $rows={f.to - f.from} />
    ))}
    {row === 16 && <Selection $k={34} $row={16} $cols={1} $rows={1} />}
  </tr>
);

export default function App() {
  return (
    <Window>
      <GlobalStyle />
      <Chrome>
        <TitleBar>
          <QuickAccess>
            <ExcelIcon size={12} />
            <svg width="72" height="12" viewBox="0 0 72 12" aria-hidden="true">
              <path d="M-3 1v10" stroke="#9a9ac4" />
              <path d="M3.500 2h8v8h-8z" fill="#4460c0" stroke="#20308c" />
              <path d="M5 2h5v3.500H5zM5.500 7.500h4V10h-4z" fill="#e8ecfa" />
              <path d="M20 3v3.500h3.500M20.500 6c1.500-3.500 6.500-3 6 .500-.2 1.500-1 2.500-2.500 3.500" fill="none" stroke="#3d62c4" strokeWidth="1.600" />
              <path d="M32 5h4l-2 2.200z" fill="#14143c" />
              <path d="M49 3v3.500h-3.500M48.500 6c-1.500-3.500-6.500-3-6 .500.2 1.500 1 2.500 2.500 3.500" fill="none" stroke="#b9b9cc" strokeWidth="1.600" />
              <path d="M55 5h3l-1.500 2zM67 6.500h4L69 9zM67 4h4v1h-4z" fill="#1d1d50" />
              <path d="M63 1v10" stroke="#9a9ac4" />
            </svg>
          </QuickAccess>
          <Title>Локации  -  Microsoft Excel</Title>
          <WindowButtons>
            <FrameButton $w={36} aria-label="Свернуть"><svg width="9" height="9" viewBox="0 0 9 9"><path d="M.500 4.500h8" stroke="#b9b9dc" /></svg></FrameButton>
            <FrameButton $w={37} aria-label="Восстановить"><svg width="9" height="9" viewBox="0 0 9 9"><path d="M1 2.500h5.500V8H1zM2.500 2.500V1H8v5.500H6.500" fill="none" stroke="#dcdcf0" /></svg></FrameButton>
            <FrameButton $w={37} aria-label="Закрыть"><svg width="9" height="9" viewBox="0 0 9 9"><path d="M1 1l7 7M8 1L1 8" stroke="#e8e8f6" /></svg></FrameButton>
          </WindowButtons>
        </TitleBar>
        <TabRow>
          <FileTab>Файл</FileTab>
          <RibbonTab $active>Главная</RibbonTab>
          {['Вставка', 'Разметка страницы', 'Формулы', 'Данные', 'Рецензирование', 'Вид'].map((t) => (
            <RibbonTab key={t}>{t}</RibbonTab>
          ))}
          <TabTools>
            <FrameButton $w={16} aria-label="Свернуть ленту"><svg width="6" height="5" viewBox="0 0 6 5"><path d="M1 3.500L3 1l2 2.500z" fill="#fff" stroke="#55555f" strokeWidth=".8" /></svg></FrameButton>
            <FrameButton $w={16} aria-label="Справка">
              <svg width="10" height="10" viewBox="0 0 10 10"><circle cx="5" cy="5" r="4.700" fill="#2f6fc8" stroke="#1d4e98" strokeWidth=".6" /><path d="M3.500 4c0-2 3-2 3-.2 0 1.200-1.500 1.200-1.500 2.200M5 7.200v1" fill="none" stroke="#fff" strokeWidth="1.100" /></svg>
            </FrameButton>
            <FrameButton $w={16} aria-label="Свернуть книгу"><svg width="8" height="8" viewBox="0 0 8 8"><rect x="1" y="3" width="6" height="2.500" fill="#fff" stroke="#55555f" strokeWidth=".8" /></svg></FrameButton>
            <FrameButton $w={16} aria-label="Восстановить книгу"><svg width="8" height="8" viewBox="0 0 8 8"><path d="M3 1h4.500v3.500H3zM.800 3.500H5V7H.800z" fill="#fff" stroke="#45455a" strokeWidth=".9" /></svg></FrameButton>
            <FrameButton $w={16} aria-label="Закрыть книгу"><svg width="8" height="8" viewBox="0 0 8 8"><path d="M1.500 1.500l5 5M6.500 1.500l-5 5" stroke="#45455a" strokeWidth="2.600" /><path d="M1.500 1.500l5 5M6.500 1.500l-5 5" stroke="#fff" strokeWidth="1.400" /></svg></FrameButton>
          </TabTools>
        </TabRow>
      </Chrome>

      <Ribbon>
        <RibbonGroup w={133} label="Буфер обмена" pad={2} launcher>
          <Big w={36} icon={<PasteIcon />} lines={['Вставить']} below faded />
          <CommandList>
            <Command><CutIcon />Вырезать</Command>
            <Command><CopyIcon />Копировать<Caret /></Command>
            <Command><PainterIcon />Формат по образцу</Command>
          </CommandList>
        </RibbonGroup>

        <RibbonGroup w={149} label="Шрифт" pad={3} launcher>
          <Stack>
            <ToolRow>
              <Picker w={76} label="Шрифт" value="Calibri" />
              <Picker w={35} label="Размер шрифта" value="8" />
              <ToolButton $w={19} aria-label="Увеличить размер">
                <Letter $size={11}>A</Letter><svg width="4" height="8" viewBox="0 0 4 8"><path d="M0 2.500L2 0l2 2.500z" fill="#2f5fae" /></svg>
              </ToolButton>
              <ToolButton $w={15} aria-label="Уменьшить размер">
                <Letter $size={8}>A</Letter><svg width="4" height="8" viewBox="0 0 4 8"><path d="M0 0h4L2 2.500z" fill="#2f5fae" /></svg>
              </ToolButton>
            </ToolRow>
            <ToolRow>
              <ToolButton $w={17} $hot aria-label="Полужирный"><Letter>Ж</Letter></ToolButton>
              <ToolButton $w={17} aria-label="Курсив"><Letter $italic>К</Letter></ToolButton>
              <ToolButton $w={17} aria-label="Подчеркнутый"><Letter $under>Ч</Letter></ToolButton>
              <CaretButton />
              <Divider />
              <ToolButton $w={20} aria-label="Границы">
                <svg width="9" height="9" viewBox="0 0 9 9"><path d="M.500.500h8v8h-8zM4.500.500v8M.500 4.500h8" fill="none" stroke="#b4bac4" /></svg>
              </ToolButton>
              <CaretButton />
              <Divider />
              <ToolButton $w={20} aria-label="Цвет заливки">
                <svg width="13" height="12" viewBox="0 0 13 12">
                  <path d="M5 1.500l4.500 3.800L6 8.500 2 5z" fill="#e6eef9" stroke="#47618c" strokeWidth=".9" />
                  <path d="M9.500 4.500c2 1 2 3 1.500 4-.8-1-1-2.500-2.500-2.500z" fill="#2f66c0" />
                  <rect x=".500" y="9.500" width="12" height="2" fill="#fff" stroke="#a0a090" strokeWidth=".7" />
                </svg>
              </ToolButton>
              <CaretButton />
              <ToolButton $w={14} aria-label="Цвет текста">
                <svg width="12" height="12" viewBox="0 0 12 12">
                  <text x="2.500" y="8" fontFamily="Liberation Serif, serif" fontWeight="700" fontSize="10" fill="#2c4f94">A</text>
                  <rect x="0" y="9" width="12" height="3" fill="#ff0000" />
                </svg>
              </ToolButton>
              <CaretButton />
            </ToolRow>
          </Stack>
        </RibbonGroup>

        <RibbonGroup w={254} label="Выравнивание" pad={3} launcher>
          <Stack>
            <ToolRow>
              <ToolButton $w={17} aria-label="По верхнему краю"><LinesIcon rows={[[2, 9], [4, 7], [6, 9]]} /></ToolButton>
              <ToolButton $w={17} aria-label="По середине"><LinesIcon rows={[[4, 9], [6, 7], [8, 9]]} /></ToolButton>
              <ToolButton $w={17} $hot aria-label="По нижнему краю"><LinesIcon rows={[[6, 9], [8, 7], [10, 9]]} /></ToolButton>
              <Divider />
              <ToolButton $w={20} aria-label="Ориентация">
                <svg width="11" height="11" viewBox="0 0 11 11">
                  <path d="M1 3l2-2 4 4-2 2zM3 5l2-2M4.500 9.500L10 4.500M7.500 4H10v2.500" fill="none" stroke="#4a4f57" strokeWidth="1.100" />
                </svg>
              </ToolButton>
              <CaretButton />
            </ToolRow>
            <ToolRow>
              <ToolButton $w={17} aria-label="По левому краю"><LeftLines /></ToolButton>
              <ToolButton $w={17} aria-label="По центру"><LinesIcon rows={[[2, 9], [4, 6], [6, 9], [8, 6], [10, 9]]} /></ToolButton>
              <ToolButton $w={17} $hot aria-label="По правому краю"><LinesIcon rows={[[2, -9], [4, -6], [6, -9], [8, -6], [10, -8]]} /></ToolButton>
              <Divider />
              <ToolButton $w={20} aria-label="Уменьшить отступ"><IndentIcon /></ToolButton>
              <ToolButton $w={17} aria-label="Увеличить отступ"><IndentIcon flip /></ToolButton>
            </ToolRow>
          </Stack>
          <Stack $divided>
            <ToolRow><ToolButton $hot><WrapIcon />Перенос текста</ToolButton></ToolRow>
            <ToolRow><ToolButton><MergeIcon />Объединить и поместить в центре<Caret /></ToolButton></ToolRow>
          </Stack>
        </RibbonGroup>

        <RibbonGroup w={102} label="Число" pad={3} launcher>
          <Stack>
            <ToolRow><Picker w={97} label="Числовой формат" value="Общий" /></ToolRow>
            <ToolRow>
              <ToolButton $w={16} aria-label="Денежный формат">
                <svg width="12" height="11" viewBox="0 0 12 11">
                  <rect x=".500" y=".500" width="10" height="5.500" fill="#5d86c6" stroke="#2b4f8c" />
                  <circle cx="5.500" cy="3.200" r="1.500" fill="#dbe7f7" />
                  <path d="M6 6.500h5v3.500H6z" fill="#f0c64a" stroke="#9a7413" strokeWidth=".7" />
                </svg>
              </ToolButton>
              <CaretButton />
              <ToolButton $w={17}>%</ToolButton>
              <ToolButton $w={17}>000</ToolButton>
              <Divider />
              <ToolButton $w={20} aria-label="Увеличить разрядность">
                <svg width="12" height="12" viewBox="0 0 12 12">
                  <text x="6" y="5" fontSize="6" fill="#333">,0</text><text x="2" y="11" fontSize="6" fill="#333">,00</text>
                  <path d="M5 3H.500M2 1.500L.500 3 2 4.500" fill="none" stroke="#2f66c0" />
                </svg>
              </ToolButton>
              <ToolButton $w={12} aria-label="Уменьшить разрядность">
                <svg width="12" height="12" viewBox="0 0 12 12">
                  <text x="2" y="5" fontSize="6" fill="#333">,00</text><text x="6" y="11" fontSize="6" fill="#333">,0</text>
                  <path d="M.500 9H5M2 7.500L.500 9 2 10.500" fill="none" stroke="#2f66c0" />
                </svg>
              </ToolButton>
            </ToolRow>
          </Stack>
        </RibbonGroup>

        <RibbonGroup w={174} label="Стили" pad={2}>
          <Big
            w={76}
            icon={<Grid><path d="M6 1.500h4.500v5H6zM6 12h4.500v4.500H6z" fill="#e0483a" /><path d="M6 6.500h8v5H6z" fill="#3f78cc" /><path d="M11 11h8v8h-8z" fill="#fff" stroke="#59616d" /><path d="M13 13l2 1-2 1M17 16.500h-4" fill="none" stroke="#333" strokeWidth=".9" /></Grid>}
            lines={['Условное', 'форматирование']}
          />
          <Big w={61} icon={<Grid><path d="M6 5.500h12.500v11H6z" fill="#6ea0e4" opacity=".8" /><Brush /></Grid>} lines={['Форматировать', 'как таблицу']} />
          <Big w={32} icon={<Grid><path d="M4 4h12v9H4z" fill="#a9c8f4" stroke="#6f97cf" /><Brush /></Grid>} lines={['Стили', 'ячеек']} />
        </RibbonGroup>

        <RibbonGroup w={105} label="Ячейки" pad={3}>
          <Big w={34} icon={<HeadTail />} lines={['Вставить']} below />
          <Big w={34} icon={<HeadTail red />} lines={['Удалить']} below />
          <Big w={32} icon={<FormatIcon />} lines={['Формат']} below />
        </RibbonGroup>

        <RibbonGroup w={165} label="Редактирование" pad={4}>
          <CommandList>
            <Command>
              <svg width="9" height="9" viewBox="0 0 9 9"><path d="M7.500 2.500V1h-6l3 3.500-3 3.500h6V6.500" fill="none" stroke="#222" strokeWidth="1.300" /></svg>
              Автосумма<Caret />
            </Command>
            <Command>
              <svg width="9" height="9" viewBox="0 0 9 9"><rect x=".500" y=".500" width="8" height="8" fill="#e2ecf9" stroke="#3c66a4" /><path d="M3.500 2h2v2.500H7L4.500 7.200 2 4.500h1.500z" fill="#2f6fd0" /></svg>
              Заполнить<Caret />
            </Command>
            <Command>
              <svg width="9" height="9" viewBox="0 0 9 9"><path d="M1 6l4-4.500L8.500 3 5 7.500H2.500z" fill="#eef1f7" stroke="#47597c" strokeWidth=".9" /></svg>
              Очистить<Caret />
            </Command>
          </CommandList>
          <Big w={46} icon={<SortIcon />} lines={['Сортировка', 'и фильтр']} />
          <Big w={44} icon={<BinocularsIcon />} lines={['Найти и', 'выделить']} />
        </RibbonGroup>
      </Ribbon>

      <FormulaBar>
        <NameBox>
          <input aria-label="Имя" defaultValue="AJ16" />
          <svg width="6" height="4" viewBox="0 0 6 4"><path d="M0 0h6L3 3.500z" fill="#333" /></svg>
        </NameBox>
        <FxButtons>
          <svg width="5" height="4" viewBox="0 0 5 4"><path d="M0 1h5M0 3h5" stroke="#a9aeb6" /></svg>
          <Fx>fx</Fx>
        </FxButtons>
        <FormulaInput aria-label="Строка формул" defaultValue="2" />
        <ExpandButton aria-label="Развернуть"><svg width="6" height="5" viewBox="0 0 6 5"><path d="M.500 1L3 3.800 5.500 1" fill="none" stroke="#444a54" strokeWidth="1.400" /></svg></ExpandButton>
      </FormulaBar>

      <SheetArea>
        <Viewport>
          <Sheet>
            <colgroup>
              {Array.from({ length: columnCount }, (_, i) => <ColumnLine key={i} $at={i + 2} />)}
            </colgroup>
            <thead>
              <tr>
                <Corner><svg width="9" height="9" viewBox="0 0 9 9"><path d="M8 1v7H1z" fill="#b4b9c1" /></svg></Corner>
                {Array.from({ length: columnCount }, (_, i) => (
                  <ColumnHeader key={i} scope="col" $at={i + 2} $on={i === 35}>{columnName(i)}</ColumnHeader>
                ))}
              </tr>
            </thead>
            <tbody>
              {rowHeights.map((_, i) => <SheetRow key={i} row={i + 1} />)}
            </tbody>
          </Sheet>
        </Viewport>
        <VerticalScroll>
          <SplitHandle />
          <ScrollButton aria-label="Вверх"><Triangle dir="up" /></ScrollButton>
          <Thumb $vertical />
          <ScrollButton aria-label="Вниз"><Triangle dir="down" /></ScrollButton>
        </VerticalScroll>
      </SheetArea>

      <SheetBar>
        <SheetTabs>
          <NavButtons>
            <ScrollButton aria-label="Первый лист"><Triangle dir="left" bar /></ScrollButton>
            <ScrollButton aria-label="Предыдущий лист"><Triangle dir="left" /></ScrollButton>
            <ScrollButton aria-label="Следующий лист"><Triangle dir="right" /></ScrollButton>
            <ScrollButton aria-label="Последний лист"><Triangle dir="right" bar /></ScrollButton>
          </NavButtons>
          <SheetTab $first>Тактическая схема</SheetTab><Slash />
          <SheetTab>Ловушки</SheetTab><Slash />
          <SheetTab>Лут</SheetTab><Slash />
          <SheetTab>Локации</SheetTab>
          <SheetTab $active>Оружие</SheetTab><Slash open />
          <SheetTab>Броня</SheetTab><Slash />
          <SheetTab>Преграды</SheetTab><Slash />
          <SheetTab>Профессии</SheetTab><Slash />
          <SheetTab aria-label="Вставить лист">
            <svg width="12" height="11" viewBox="0 0 12 11"><path d="M3 2.500h8v4.500L9 9.500H4.500" fill="#f4f8fd" stroke="#5a7fb4" /><circle cx="2.500" cy="2.500" r="2" fill="#f0a030" /></svg>
          </SheetTab>
          <Slash />
        </SheetTabs>
        <HorizontalScroll>
          <SplitHandle $tall />
          <ScrollButton aria-label="Влево"><Triangle dir="left" /></ScrollButton>
          <Thumb />
          <ScrollButton aria-label="Вправо"><Triangle dir="right" /></ScrollButton>
          <SplitHandle $tall />
        </HorizontalScroll>
      </SheetBar>

      <StatusBar>
        <StatusText>Готово</StatusText>
        <ViewButtons>
          <ToolButton $w={14} $hot aria-label="Обычный"><svg width="11" height="9" viewBox="0 0 11 9"><path d="M.500.500h10v8h-10zM.500 3h10M.500 6h10M3 .500v8M5.500.500v8M8 .500v8" fill="#fff" stroke="#5c5030" strokeWidth=".8" /></svg></ToolButton>
          <ToolButton $w={14} aria-label="Разметка страницы"><svg width="11" height="9" viewBox="0 0 11 9"><rect x=".500" y=".500" width="10" height="8" fill="#9a9fa7" stroke="#5f646c" /><rect x="3" y="2" width="5" height="5" fill="#fff" /></svg></ToolButton>
          <ToolButton $w={14} aria-label="Страничный режим"><svg width="11" height="9" viewBox="0 0 11 9"><rect x=".500" y=".500" width="10" height="8" fill="#fff" stroke="#5f646c" /><path d="M3.500 0v5M7.500 0v5M0 5.500h8" stroke="#5f646c" strokeWidth="1.400" /></svg></ToolButton>
          <ZoomValue>85%</ZoomValue>
          <ScrollButton aria-label="Уменьшить"><svg width="12" height="12" viewBox="0 0 12 12"><circle cx="6" cy="6" r="5.500" fill="#f4f5f7" stroke="#777c84" strokeWidth=".8" /><path d="M3.500 6h5" stroke="#444" /></svg></ScrollButton>
          <ZoomSlider type="range" min={10} max={400} step={1} defaultValue={174} aria-label="Масштаб" />
          <ScrollButton aria-label="Увеличить"><svg width="12" height="12" viewBox="0 0 12 12"><circle cx="6" cy="6" r="5.500" fill="#f4f5f7" stroke="#777c84" strokeWidth=".8" /><path d="M3.500 6h5M6 3.500v5" stroke="#444" /></svg></ScrollButton>
        </ViewButtons>
      </StatusBar>

      <Taskbar>
        <TaskButton $w={38} aria-label="Пуск">
          <svg width="14" height="14" viewBox="0 0 14 14"><path d="M.500 2.400l5.500-.8v5H.500zM6.800 1.500L13.500.500v6.100H6.800zM.500 7.400H6v5l-5.500-.8zM6.800 7.400h6.700v6.100l-6.700-1z" fill="#0b0b0b" /></svg>
        </TaskButton>
        <TaskButton $w={50} aria-label="Алиса">
          <svg width="20" height="20" viewBox="0 0 20 20">
            <defs><linearGradient id="alice" x1="0" y1="1" x2="1" y2="0"><stop offset="0" stopColor="#b04cf4" /><stop offset="1" stopColor="#6a5cf6" /></linearGradient></defs>
            <circle cx="10" cy="10" r="9.500" fill="url(#alice)" />
            <path d="M10 5c1.300 0 4 4.500 4 6.300 0 1.500-1.800 2.400-4 2.400s-4-.9-4-2.400C6 9.500 8.700 5 10 5z" fill="#fff" />
          </svg>
        </TaskButton>
        <TaskButton $w={36} $open aria-label="Проводник">
          <svg width="18" height="16" viewBox="0 0 18 16">
            <path d="M.500 1h7l1 1.500h9v12h-17z" fill="#f7c443" />
            <path d="M.500 1h7v2.500h-7z" fill="#d99a15" />
            <path d="M3.500 15.500V8.500h11v7h-3V12h-5v3.500z" fill="#3f8fd8" />
          </svg>
        </TaskButton>
        <TaskButton $w={36} aria-label="Chrome">
          <svg width="18" height="18" viewBox="0 0 18 18">
            <circle cx="9" cy="9" r="8.500" fill="#fbbc1c" />
            <path d="M1.640 4.750A8.500 8.500 0 0 1 16.360 4.750H9L5.320 11.100z" fill="#dc4434" />
            <path d="M1.640 4.750A8.500 8.500 0 0 0 9 17.500l3.680-6.400H5.320z" fill="#2a9d4e" />
            <circle cx="9" cy="9" r="4.200" fill="#fff" />
            <circle cx="9" cy="9" r="3.300" fill="#4285f4" />
          </svg>
        </TaskButton>
        <TaskButton $w={36} $open aria-label="Яндекс Браузер">
          <svg width="18" height="18" viewBox="0 0 18 18">
            <circle cx="9" cy="9" r="8.500" fill="#f4f4f4" stroke="#d2d2d2" strokeWidth=".6" />
            <path d="M4.500 3.500L9 9.500l4.500-6M9 9v6.500" fill="none" stroke="#d41414" strokeWidth="2.200" />
          </svg>
        </TaskButton>
        <TaskButton $w={38} $active aria-label="Excel"><ExcelIcon size={18} /></TaskButton>
        <Tray>
          <TrayButton $w={20} aria-label="Скрытые значки"><svg width="11" height="7" viewBox="0 0 11 7"><path d="M.800 6L5.500 1.300 10.200 6" fill="none" stroke="#1c2226" /></svg></TrayButton>
          <TrayButton $w={18} aria-label="Микрофон"><svg width="10" height="14" viewBox="0 0 10 14"><rect x="2.500" y="0" width="5" height="9" rx="1" fill="#0c0c0c" /><path d="M1 6v3.500h8V6M5 9.500V13M3 13h4" fill="none" stroke="#0c0c0c" /></svg></TrayButton>
          <TrayButton $w={20} aria-label="Батарея"><svg width="13" height="8" viewBox="0 0 13 8"><path d="M.500 1h10.500v6H.500z" fill="none" stroke="#1c2226" /><path d="M11 3h1.500v2H11z" fill="#1c2226" /><path d="M1.500 2h4v4h-4z" fill="#0c0c0c" /></svg></TrayButton>
          <TrayButton $w={16} aria-label="Сеть">
            <svg width="12" height="12" viewBox="0 0 12 12"><path d="M1 11C1 5.500 5 1.500 11 1.500M3.500 11C3.500 7 6.500 4 11 4M6 11C6 8.500 8 6.500 11 6.500M8.200 11c0-1.200 1.200-2.200 2.800-2.200" fill="none" stroke="#2c3236" strokeWidth=".9" /></svg>
          </TrayButton>
          <TrayButton $w={22} aria-label="Звук">
            <svg width="13" height="10" viewBox="0 0 13 10"><path d="M.500 3.500h2L5.500 1v8L2.500 6.500h-2zM7 3.500c.8 1 .8 2 0 3M8.800 2.300c1.500 1.600 1.500 3.800 0 5.400M10.600 1c2.200 2.400 2.200 5.600 0 8" fill="none" stroke="#1c2226" strokeWidth=".9" /></svg>
          </TrayButton>
          <TrayButton $w={24}>РУС</TrayButton>
          <Clock dateTime="2022-03-26T20:14"><div>20:14</div><div>26.03.2022</div></Clock>
          <TrayButton $w={30} aria-label="Уведомления">
            <svg width="20" height="20" viewBox="0 0 20 20">
              <path d="M2 3h13v10H8l-3 3v-3H2z" fill="#0c0c0c" />
              <path d="M4 5.500h9M4 8h9M4 10.500h6" stroke="#d8e8d8" strokeWidth=".8" />
              <circle cx="14.500" cy="14" r="5" fill="#c4c8c4" stroke="#6a706a" strokeWidth=".8" />
              <text x="12.700" y="17" fontSize="8" fill="#111">1</text>
            </svg>
          </TrayButton>
        </Tray>
      </Taskbar>
    </Window>
  );
}
